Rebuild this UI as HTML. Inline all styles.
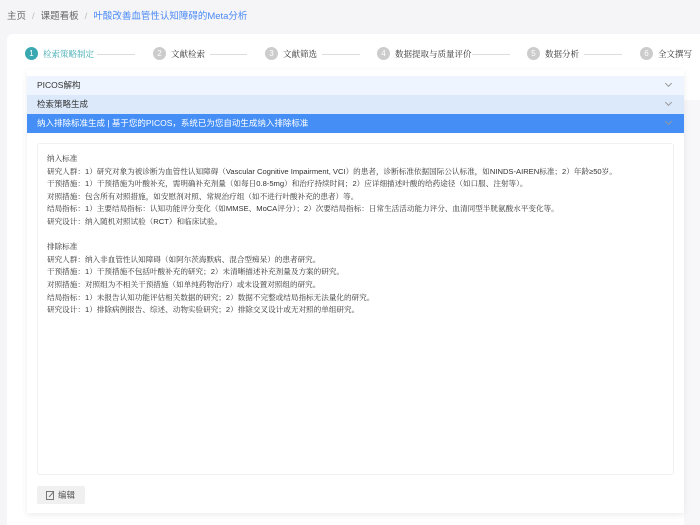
<!DOCTYPE html>
<html><head><meta charset="utf-8"><style>
*{margin:0;padding:0;box-sizing:border-box}
body{width:700px;height:525px;background:#f5f5f8;font-family:"Liberation Sans","Noto Sans CJK SC",sans-serif;position:relative;overflow:hidden;color:#333}
.bc{position:absolute;top:8px;left:7px;font-size:9.5px;color:#666}
.bc span.s{color:#bbb;margin:0 6px}
.bc .cur{color:#4a8af4}
.panel{position:absolute;left:7px;top:34px;width:693px;height:491px;background:#fff;border-radius:6px 0 0 0}
.rgrey{position:absolute;left:684px;top:100px;width:16px;height:425px;background:#f7f7f9}
.card{position:absolute;left:27px;top:70px;width:657px;height:443px;background:#fff;box-shadow:0 2px 6px rgba(0,0,0,.08)}
.step{position:absolute;top:47px;font-size:8.5px;color:#333;display:flex;align-items:center;font-family:"Liberation Sans","Noto Serif CJK SC",serif}
.step i{display:inline-block;width:13px;height:13px;border-radius:50%;background:#ccc;color:#fff;font-style:normal;font-size:8px;text-align:center;line-height:13px;margin-right:5px;font-family:"Liberation Sans",sans-serif}
.step.on{color:#3aa8b0}.step.on i{background:#3aa8b0}
.ln{position:absolute;top:54px;height:1px;background:#ddd}
.row{position:absolute;left:27px;width:657px;height:19px;font-size:8.5px;line-height:19px;padding-left:10px}
.row:after{content:"";position:absolute;right:13px;top:5px;width:4px;height:4px;border-right:1px solid #999;border-bottom:1px solid #999;transform:rotate(45deg)}
.ta{position:absolute;left:37px;top:143px;width:637px;height:332px;border:1px solid #f0f0f0;border-radius:3px;padding:9px 9px;font-size:7.6px;line-height:12.6px;color:#333;font-family:"Liberation Sans","Noto Serif CJK SC",serif}
.btn{position:absolute;left:37px;top:486px;width:48px;height:18px;background:#f0f0f0;border-radius:2px;font-size:8.5px;color:#555;line-height:18px;padding-left:21px}
.btn svg{position:absolute;left:9px;top:4px}
</style></head><body>
<div class="bc">主页<span class="s">/</span>课题看板<span class="s">/</span><span class="cur">叶酸改善血管性认知障碍的Meta分析</span></div>
<div class="panel"></div>
<div class="rgrey"></div>
<div class="step on" style="left:25px"><i>1</i>检索策略制定</div>
<div class="ln" style="left:97px;width:38px"></div>
<div class="step" style="left:153px"><i>2</i>文献检索</div>
<div class="ln" style="left:210px;width:37px"></div>
<div class="step" style="left:265px"><i>3</i>文献筛选</div>
<div class="ln" style="left:322px;width:38px"></div>
<div class="step" style="left:377px"><i>4</i>数据提取与质量评价</div>
<div class="ln" style="left:472px;width:38px"></div>
<div class="step" style="left:527px"><i>5</i>数据分析</div>
<div class="ln" style="left:584px;width:38px"></div>
<div class="step" style="left:640px"><i>6</i>全文撰写</div>
<div class="card"></div>
<div class="row" style="top:76px;background:#eef5fe">PICOS解构</div>
<div class="row" style="top:95px;background:#dbe9fb">检索策略生成</div>
<div class="row" style="top:114px;background:#448ef6;color:#fff">纳入排除标准生成 | 基于您的PICOS，系统已为您自动生成纳入排除标准</div>
<div class="ta">纳入标准<br>研究人群：1）研究对象为被诊断为血管性认知障碍（Vascular Cognitive Impairment, VCI）的患者，诊断标准依据国际公认标准，如NINDS-AIREN标准；2）年龄≥50岁。<br>干预措施：1）干预措施为叶酸补充，需明确补充剂量（如每日0.8-5mg）和治疗持续时间；2）应详细描述叶酸的给药途径（如口服、注射等）。<br>对照措施：包含所有对照措施，如安慰剂对照、常规治疗组（如不进行叶酸补充的患者）等。<br>结局指标：1）主要结局指标：认知功能评分变化（如MMSE、MoCA评分）；2）次要结局指标：日常生活活动能力评分、血清同型半胱氨酸水平变化等。<br>研究设计：纳入随机对照试验（RCT）和临床试验。<br><br>排除标准<br>研究人群：纳入非血管性认知障碍（如阿尔茨海默病、混合型痴呆）的患者研究。<br>干预措施：1）干预措施不包括叶酸补充的研究；2）未清晰描述补充剂量及方案的研究。<br>对照措施：对照组为不相关干预措施（如单纯药物治疗）或未设置对照组的研究。<br>结局指标：1）未报告认知功能评估相关数据的研究；2）数据不完整或结局指标无法量化的研究。<br>研究设计：1）排除病例报告、综述、动物实验研究；2）排除交叉设计或无对照的单组研究。</div>
<div class="btn"><svg width="9" height="10" viewBox="0 0 9 10"><rect x="0.5" y="1.5" width="7" height="8" fill="none" stroke="#777"/><path d="M3 7 L8 1.5" stroke="#777"/></svg>编辑</div>
</body></html>
